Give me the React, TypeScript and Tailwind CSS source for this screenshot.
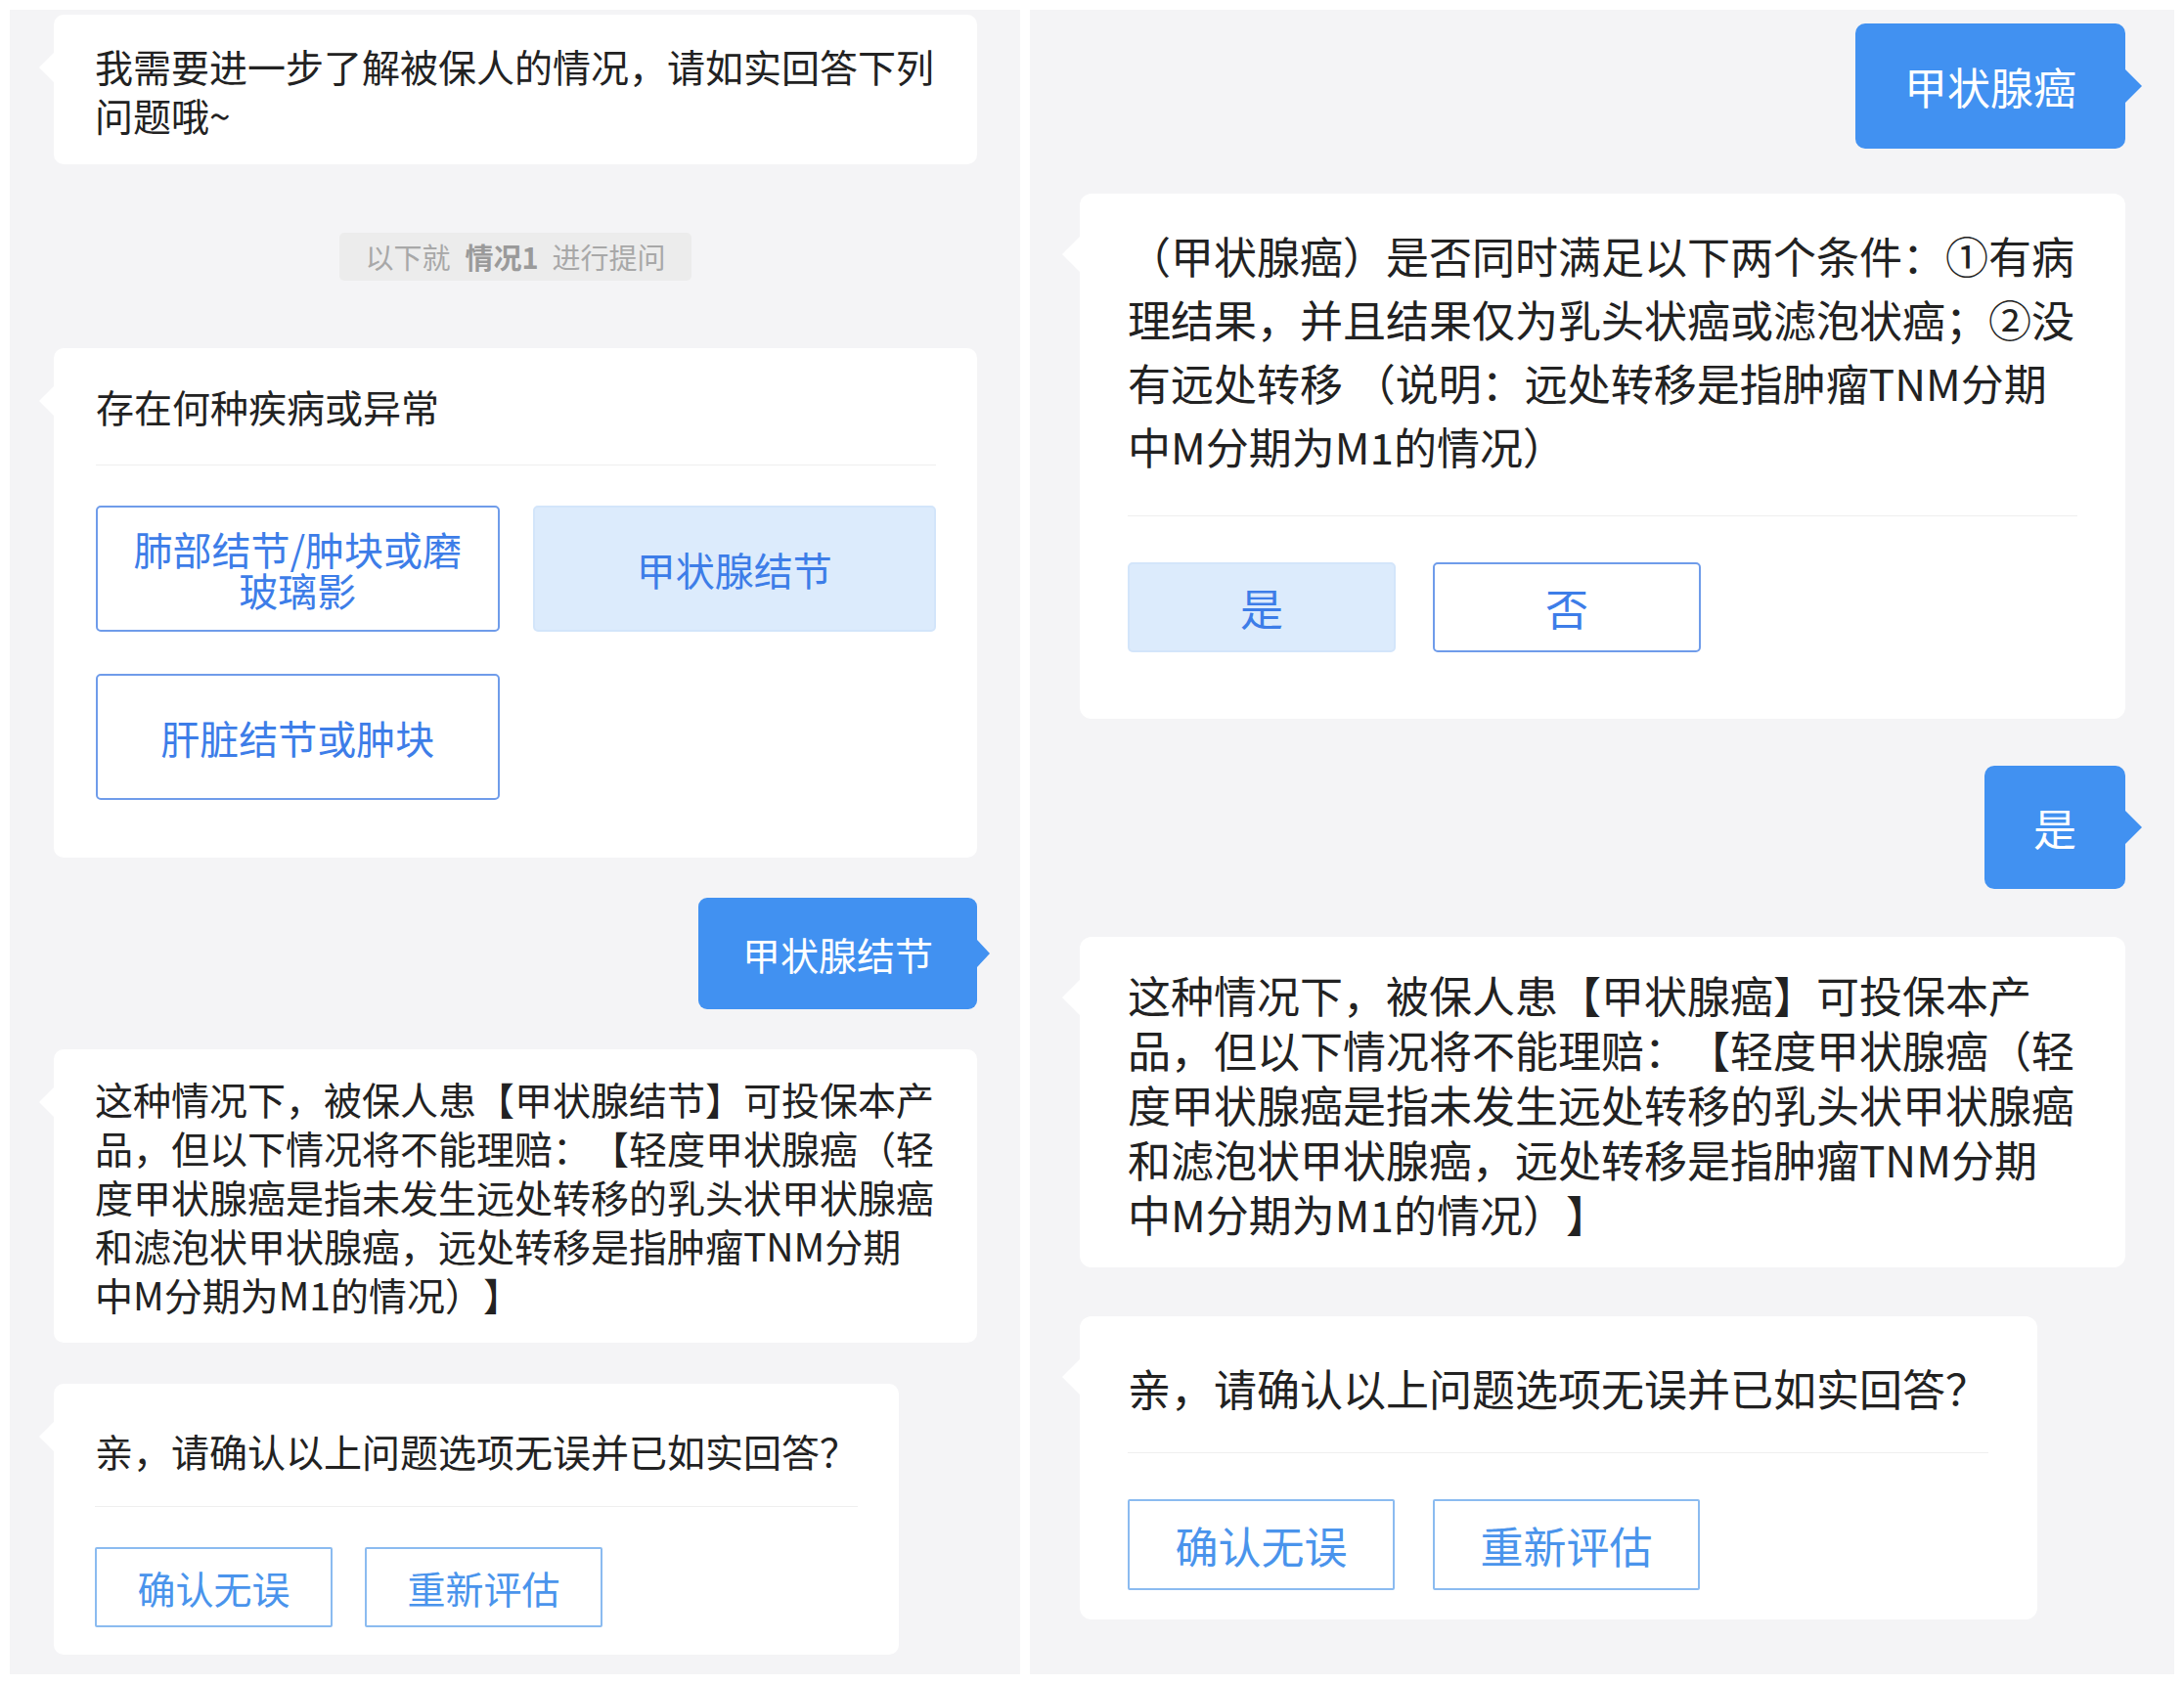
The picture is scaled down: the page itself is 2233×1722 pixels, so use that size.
import React from "react";

function BotTail({ big }: { big?: boolean }) {
  return big ? (
    <span className="absolute left-[-18px] top-[44px] h-0 w-0 border-y-[18px] border-r-[18px] border-y-transparent border-r-white" />
  ) : (
    <span className="absolute left-[-15px] top-[39px] h-0 w-0 border-y-[15px] border-r-[15px] border-y-transparent border-r-white" />
  );
}

function UserTail({ big }: { big?: boolean }) {
  return big ? (
    <span className="absolute right-[-17px] top-1/2 h-0 w-0 -translate-y-1/2 border-y-[17px] border-l-[17px] border-y-transparent border-l-[#4191f1]" />
  ) : (
    <span className="absolute right-[-13px] top-1/2 h-0 w-0 -translate-y-1/2 border-y-[14px] border-l-[13px] border-y-transparent border-l-[#4191f1]" />
  );
}

function Line({ children }: { children: React.ReactNode }) {
  return <span className="block whitespace-nowrap">{children}</span>;
}

function LeftPanel() {
  return (
    <div className="flex h-[1702px] w-[1033px] flex-col bg-[#f4f4f6] pl-[45px] pr-[44px]">
      {/* card 1 */}
      <div className="relative mt-[5px] rounded-[10px] bg-white px-[42px] pb-[26px] pt-[27px] text-[39px] leading-[50px] text-[#222]">
        <BotTail />
        <Line>我需要进一步了解被保人的情况，请如实回答下列</Line>
        <Line>问题哦~</Line>
      </div>

      {/* chip */}
      <div className="mt-[70px] flex h-[49px] items-center self-center rounded-[5px] bg-[#ececec] px-[26px] text-[29px] text-[#a8a8a8]">
        <span>以下就</span>
        <span className="ml-[15px] mr-[14px] font-bold text-[#9a9a9a]">情况1</span>
        <span>进行提问</span>
      </div>

      {/* card 2 */}
      <div className="relative mt-[69px] rounded-[10px] bg-white pb-[59px] pl-[43px] pr-[42px] pt-[34px]">
        <BotTail />
        <div className="text-[39px] leading-[50px] text-[#222]">存在何种疾病或异常</div>
        <div className="mt-[35px] h-px bg-[#efefef]" />
        <div className="mt-[41px] grid grid-cols-2 gap-x-[34px] gap-y-[43px]">
          <div className="flex h-[129px] flex-col items-center justify-center rounded-[5px] border-2 border-[#6f9cea] bg-white text-center text-[40px] leading-[42px] text-[#3d7de8]">
            <Line>肺部结节/肿块或磨</Line>
            <Line>玻璃影</Line>
          </div>
          <div className="flex h-[129px] items-center justify-center rounded-[5px] border-2 border-[#d3e5fa] bg-[#dcebfc] text-[40px] leading-[42px] text-[#3d7de8]">
            甲状腺结节
          </div>
          <div className="flex h-[129px] items-center justify-center rounded-[5px] border-2 border-[#6f9cea] bg-white text-[40px] leading-[42px] text-[#3d7de8]">
            肝脏结节或肿块
          </div>
        </div>
      </div>

      {/* user bubble */}
      <div className="relative mt-[41px] flex h-[114px] items-center self-end rounded-[9px] bg-[#4191f1] px-[45px] text-[39px] text-white">
        甲状腺结节
        <UserTail />
      </div>

      {/* card 3 */}
      <div className="relative mt-[41px] rounded-[10px] bg-white px-[42px] pb-[25px] pt-[25px] text-[39px] leading-[50px] text-[#222]">
        <BotTail />
        <Line>这种情况下，被保人患【甲状腺结节】可投保本产</Line>
        <Line>品，但以下情况将不能理赔：【轻度甲状腺癌（轻</Line>
        <Line>度甲状腺癌是指未发生远处转移的乳头状甲状腺癌</Line>
        <Line>和滤泡状甲状腺癌，远处转移是指肿瘤TNM分期</Line>
        <Line>中M分期为M1的情况）】</Line>
      </div>

      {/* card 4 */}
      <div className="relative mt-[42px] self-start rounded-[10px] bg-white px-[42px] pb-[28px] pt-[43px]">
        <BotTail />
        <div className="whitespace-nowrap text-[39px] leading-[50px] text-[#222]">亲，请确认以上问题选项无误并已如实回答？</div>
        <div className="mt-[32px] h-px bg-[#efefef]" />
        <div className="mt-[41px] flex gap-[33px]">
          <div className="flex h-[82px] w-[243px] items-center justify-center rounded-[2px] border-2 border-[#8bbbf0] text-[39px] text-[#4a94ec]">
            确认无误
          </div>
          <div className="flex h-[82px] w-[243px] items-center justify-center rounded-[2px] border-2 border-[#8bbbf0] text-[39px] text-[#4a94ec]">
            重新评估
          </div>
        </div>
      </div>
    </div>
  );
}

function RightPanel() {
  return (
    <div className="flex h-[1702px] w-[1170px] flex-col bg-[#f4f4f6] pl-[51px] pr-[50px]">
      {/* bubble 1 */}
      <div className="relative mt-[14px] flex h-[128px] items-center self-end rounded-[10px] bg-[#4191f1] px-[50px] text-[44px] text-white">
        甲状腺癌
        <UserTail big />
      </div>

      {/* card A */}
      <div className="relative mt-[46px] rounded-[12px] bg-white pb-[68px] pl-[49px] pr-[49px] pt-[31px]">
        <BotTail big />
        <div className="text-[44px] leading-[65px] text-[#222]">
          <Line>（甲状腺癌）是否同时满足以下两个条件：①有病</Line>
          <Line>理结果，并且结果仅为乳头状癌或滤泡状癌；②没</Line>
          <Line>有远处转移 （说明：远处转移是指肿瘤TNM分期</Line>
          <Line>中M分期为M1的情况）</Line>
        </div>
        <div className="mt-[38px] h-px bg-[#efefef]" />
        <div className="mt-[47px] flex gap-[38px]">
          <div className="flex h-[92px] w-[274px] items-center justify-center rounded-[5px] border-2 border-[#d3e5fa] bg-[#dcebfc] text-[44px] text-[#3d7de8]">
            是
          </div>
          <div className="flex h-[92px] w-[274px] items-center justify-center rounded-[5px] border-2 border-[#6f9cea] bg-white text-[44px] text-[#3d7de8]">
            否
          </div>
        </div>
      </div>

      {/* bubble 2 */}
      <div className="relative mt-[48px] flex h-[126px] items-center self-end rounded-[10px] bg-[#4191f1] px-[50px] text-[44px] text-white">
        是
        <UserTail big />
      </div>

      {/* card B */}
      <div className="relative mt-[49px] rounded-[12px] bg-white pb-[27px] pl-[49px] pr-[49px] pt-[31px] text-[44px] leading-[56px] text-[#222]">
        <BotTail big />
        <Line>这种情况下，被保人患【甲状腺癌】可投保本产</Line>
        <Line>品，但以下情况将不能理赔：【轻度甲状腺癌（轻</Line>
        <Line>度甲状腺癌是指未发生远处转移的乳头状甲状腺癌</Line>
        <Line>和滤泡状甲状腺癌，远处转移是指肿瘤TNM分期</Line>
        <Line>中M分期为M1的情况）】</Line>
      </div>

      {/* card C */}
      <div className="relative mt-[50px] self-start rounded-[12px] bg-white pb-[30px] pl-[49px] pr-[50px] pt-[45px]">
        <BotTail big />
        <div className="whitespace-nowrap text-[44px] leading-[57px] text-[#222]">亲，请确认以上问题选项无误并已如实回答？</div>
        <div className="mt-[37px] h-px bg-[#efefef]" />
        <div className="mt-[47px] flex gap-[39px]">
          <div className="flex h-[93px] w-[273px] items-center justify-center rounded-[2px] border-2 border-[#8bbbf0] text-[44px] text-[#4a94ec]">
            确认无误
          </div>
          <div className="flex h-[93px] w-[273px] items-center justify-center rounded-[2px] border-2 border-[#8bbbf0] text-[44px] text-[#4a94ec]">
            重新评估
          </div>
        </div>
      </div>
    </div>
  );
}

export default function App() {
  return (
    <div className="flex h-[1722px] w-[2233px] gap-[10px] bg-white p-[10px] font-['Noto_Sans_CJK_SC',sans-serif] [text-spacing-trim:space-all]">
      <LeftPanel />
      <RightPanel />
    </div>
  );
}
